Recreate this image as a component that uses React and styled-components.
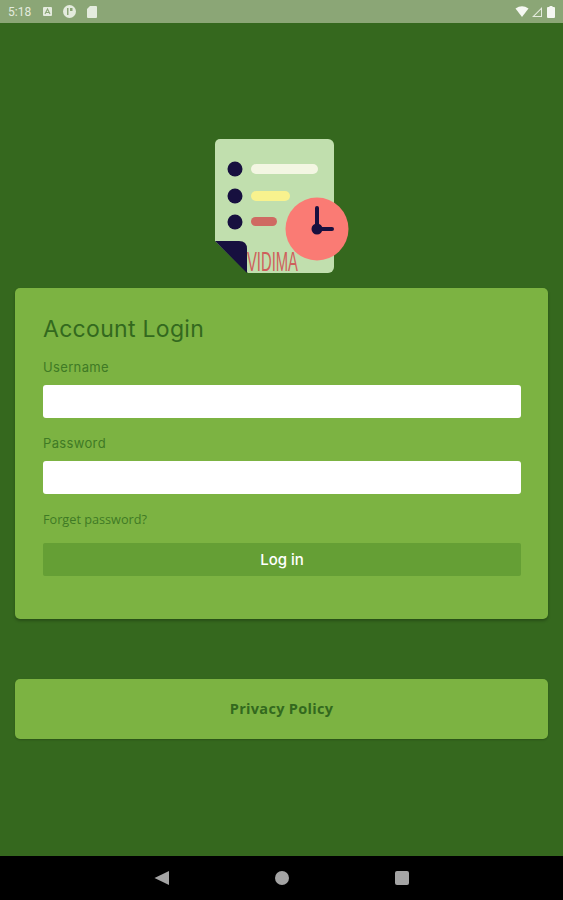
import React from 'react';
import styled, { createGlobalStyle } from 'styled-components';

const GlobalStyle = createGlobalStyle`
  html, body {
    margin: 0;
    padding: 0;
    background: #000;
  }
  * {
    box-sizing: border-box;
  }
`;

const Screen = styled.div`
  display: flex;
  flex-direction: column;
  width: 563px;
  height: 900px;
  overflow: hidden;
  font-family: Inter, "Liberation Sans", sans-serif;
`;

const StatusBar = styled.div`
  display: flex;
  align-items: center;
  justify-content: space-between;
  height: 23px;
  padding: 0 6px 0 8px;
  background: #8ba676;
  color: #e4ebde;
`;

const StatusGroup = styled.div`
  display: flex;
  align-items: center;
  gap: ${(p) => p.$gap}px;
`;

const Time = styled.span`
  font-family: Roboto, sans-serif;
  font-size: 12px;
  margin-right: 1px;
`;

const Main = styled.main`
  flex: 1;
  display: flex;
  flex-direction: column;
  align-items: center;
  padding: 116px 15px 0;
  background: #35681e;
`;

const Logo = styled.svg`
  display: block;
  width: 136px;
  height: 142px;
  margin-bottom: 7px;
`;

const Card = styled.section`
  width: 100%;
  height: 331px;
  padding: 26px 27px 0 28px;
  background: #7cb342;
  border-radius: 5px;
  box-shadow: 0 2px 3px rgba(0, 0, 0, 0.25);
`;

const Title = styled.h1`
  margin: 0 0 14px;
  font-size: 23px;
  line-height: 30px;
  font-weight: 400;
  letter-spacing: 0.3px;
  color: #33691e;
`;

const Label = styled.label`
  display: block;
  height: 18px;
  margin-bottom: 9px;
  font-size: 13px;
  line-height: 18px;
  letter-spacing: 0.35px;
  color: #3f7a25;
`;

const Input = styled.input`
  display: block;
  width: 100%;
  height: 33px;
  margin-bottom: 16px;
  border: 0;
  border-radius: 3px;
  background: #fff;
  outline: none;
`;

const Forget = styled.a`
  display: block;
  height: 18px;
  margin-top: 16px;
  font-family: "Open Sans", sans-serif;
  font-size: 12.7px;
  line-height: 18px;
  color: #3f7a25;
`;

const LoginButton = styled.button`
  display: block;
  width: 100%;
  height: 33px;
  margin-top: 15px;
  padding: 0;
  border: 0;
  border-radius: 2px;
  background: #659f35;
  color: #fff;
  font-family: inherit;
  font-size: 15px;
  font-weight: 500;
`;

const PolicyCard = styled.button`
  display: block;
  width: 100%;
  height: 60px;
  margin-top: 60px;
  padding: 0 0 2px;
  border: 0;
  border-radius: 5px;
  background: #7cb342;
  color: #33691e;
  font-family: "Open Sans", sans-serif;
  font-size: 14.5px;
  font-weight: 700;
  letter-spacing: 0.3px;
  box-shadow: 0 1px 2px rgba(0, 0, 0, 0.2);
`;

const NavBar = styled.nav`
  display: flex;
  align-items: center;
  justify-content: center;
  gap: 104px;
  height: 44px;
  background: #000;
`;

const NavIcon = styled.svg`
  display: block;
  width: 16px;
  height: 16px;
  fill: #a4a4a4;
`;

const App = () => (
  <Screen>
    <GlobalStyle />
    <StatusBar>
      <StatusGroup $gap={11}>
        <Time>5:18</Time>
        <svg width="9" height="9" viewBox="0 0 9 9">
          <rect width="9" height="9" rx="1" fill="#e4ebde" />
          <path d="M2 7 4.500 2 7 7M3 5.500h3" fill="none" stroke="#8ba676" strokeWidth="1.100" />
        </svg>
        <svg width="13" height="13" viewBox="0 0 13 13">
          <circle cx="6.500" cy="6.500" r="6.500" fill="#e4ebde" />
          <path d="M4 3h1.500v7H4zM7 3h2.500v3H7z" fill="#8ba676" />
        </svg>
        <svg width="10" height="12" viewBox="0 0 10 12">
          <path d="M3 0h6a1 1 0 0 1 1 1v10a1 1 0 0 1-1 1H1a1 1 0 0 1-1-1V3z" fill="#e4ebde" />
        </svg>
      </StatusGroup>
      <StatusGroup $gap={2}>
        <svg width="14" height="11" viewBox="0 0 13 11">
          <path d="M0 2.500Q6.500-2 13 2.500L6.500 11z" fill="#f5f7f2" />
        </svg>
        <svg width="12" height="12" viewBox="0 0 12 12">
          <path d="M11 1v10H1zM10 3.500 3.500 10H10z" fill="#e4ebde" fillRule="evenodd" />
        </svg>
        <svg width="12" height="12" viewBox="0 0 12 12">
          <path d="M2 2q0-1 1-1h1.500V0h3v1H9q1 0 1 1v9q0 1-1 1H3q-1 0-1-1z" fill="#f5f7f2" />
        </svg>
      </StatusGroup>
    </StatusBar>
    <Main>
      <Logo viewBox="0 0 136 142">
        <path d="M6 0h108a6 6 0 0 1 6 6v122a6 6 0 0 1-6 6H34L1 102V5a5 5 0 0 1 5-5z" fill="#c1dfae" />
        <path d="M1 102h24q8 0 8 8v24z" fill="#17103f" />
        <circle cx="21" cy="30" r="7.500" fill="#17103f" />
        <circle cx="21" cy="57" r="7.500" fill="#17103f" />
        <circle cx="21" cy="83" r="7.500" fill="#17103f" />
        <rect x="37" y="25" width="67" height="10" rx="5" fill="#f3f6e2" />
        <rect x="37" y="52" width="39" height="10" rx="5" fill="#f8f28e" />
        <rect x="37" y="78" width="26" height="9" rx="4.500" fill="#cf6a62" />
        <circle cx="103" cy="90" r="31.500" fill="#fa7b74" />
        <path d="M103 69v21h15" fill="none" stroke="#17103f" strokeWidth="4" strokeLinecap="round" />
        <circle cx="103" cy="90" r="5.500" fill="#17103f" />
        <text x="33" y="132" fontFamily="'Liberation Sans', sans-serif" fontSize="27" fill="#cf5f5c" textLength="51" lengthAdjust="spacingAndGlyphs">VIDIMA</text>
      </Logo>
      <Card>
        <Title>Account Login</Title>
        <Label>Username</Label>
        <Input />
        <Label>Password</Label>
        <Input />
        <Forget>Forget password?</Forget>
        <LoginButton>Log in</LoginButton>
      </Card>
      <PolicyCard>Privacy Policy</PolicyCard>
    </Main>
    <NavBar>
      <NavIcon viewBox="0 0 16 16">
        <path d="M15 1v14L0.500 8z" />
      </NavIcon>
      <NavIcon viewBox="0 0 16 16">
        <circle cx="8" cy="8" r="7" />
      </NavIcon>
      <NavIcon viewBox="0 0 16 16">
        <rect x="1" y="1" width="14" height="14" rx="2" />
      </NavIcon>
    </NavBar>
  </Screen>
);

export default App;
